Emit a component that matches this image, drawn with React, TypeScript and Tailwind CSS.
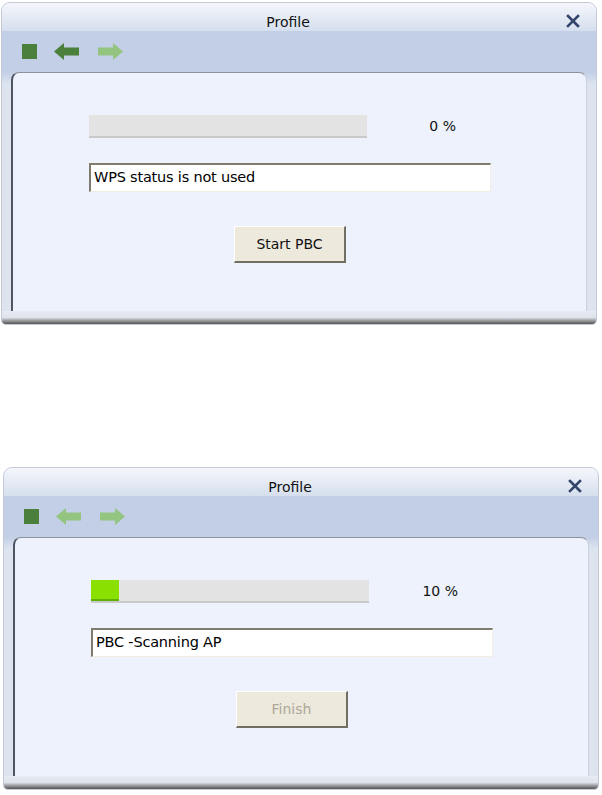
import React from "react";

type WindowProps = {
  percent: number;
  status: string;
  buttonLabel: string;
  buttonDisabled?: boolean;
  backEnabled?: boolean;
};

function StopIcon() {
  return <span className="block h-[15px] w-[15px] bg-[#4b7f3c]" />;
}

function ArrowIcon({ dir, color }: { dir: "left" | "right"; color: string }) {
  return (
    <svg width="26" height="17" viewBox="0 0 26 17" className={dir === "right" ? "-scale-x-100" : ""}>
      <path d="M0 8.5 L10 0 L10 4.5 L25 4.5 L25 12.5 L10 12.5 L10 17 Z" fill={color} />
    </svg>
  );
}

function CloseIcon() {
  return (
    <svg width="14" height="14" viewBox="0 0 14 14">
      <path d="M2 2 L12 12 M12 2 L2 12" stroke="#34456b" strokeWidth="2.6" strokeLinecap="square" />
    </svg>
  );
}

function ProfileWindow({ percent, status, buttonLabel, buttonDisabled, backEnabled }: WindowProps) {
  return (
    <div className="flex h-[323px] w-[596px] flex-col overflow-hidden rounded-t-[9px] rounded-b-[5px] border border-[#c3cad6] bg-[#dde4f0]">
      <div className="relative flex h-[28px] shrink-0 items-end justify-center bg-gradient-to-b from-[#f4f6fb] to-[#d6dfee] pr-[22px]">
        <span className="text-[14px] leading-[18px] text-[#111]">Profile</span>
        <span className="absolute right-[16px] top-[11px]">
          <CloseIcon />
        </span>
      </div>
      <div className="flex h-[41px] shrink-0 items-center gap-[17px] bg-[#c2cfe6] pl-[20px]">
        <StopIcon />
        <ArrowIcon dir="left" color={backEnabled ? "#4b7f3c" : "#93c480"} />
        <ArrowIcon dir="right" color="#93c480" />
      </div>
      <div className="flex flex-1 flex-col bg-gradient-to-b from-[#c2cfe6] to-[#dde4f0] to-[12px] px-[9px]">
        <div className="flex-1 rounded-t-[8px] border-l-2 border-t border-r border-[#4e5563] border-t-[#8c929c] border-r-[#c9d1de] bg-[#eef2fd] pl-[76px] pt-[42px]">
          <div className="flex items-center">
            <div className="relative h-[23px] w-[278px] overflow-hidden border-b-2 border-[#c9c9c9] bg-[#e3e3e3]">
              {percent > 0 ? (
                <div className="h-full border-b-2 border-[#5fb200] bg-[#8ae000]" style={{ width: `${percent}%` }} />
              ) : null}
            </div>
            <span className="w-[89px] text-right text-[14px] text-[#111]">{percent} %</span>
          </div>
          <div className="mt-[25px] flex h-[29px] w-[402px] items-center border-l-2 border-t-2 border-[#7f7b6f] border-b border-r border-b-[#f1ede2] border-r-[#f1ede2] bg-white pl-[3px] text-[14.5px] tracking-[-0.2px] text-black">
            {status}
          </div>
          <button
            type="button"
            disabled={buttonDisabled}
            className={`ml-[145px] mt-[34px] h-[37px] w-[112px] border border-t-white border-l-white border-b-2 border-r-2 border-b-[#716f64] border-r-[#716f64] bg-[#ede9dd] text-[14px] ${buttonDisabled ? "text-[#aca899]" : "text-[#111]"}`}
          >
            {buttonLabel}
          </button>
        </div>
      </div>
      <div className="h-[13px] shrink-0 bg-gradient-to-b from-[#e6ebf4] via-[#dfe3ea] via-50% to-[#555]" />
    </div>
  );
}

export default function App() {
  return (
    <div className="min-h-[795px] w-[602px] bg-white pl-[1px] pt-[2px]" style={{ fontFamily: '"DejaVu Sans", Verdana, sans-serif' }}>
      <ProfileWindow percent={0} status="WPS status is not used" buttonLabel="Start PBC" backEnabled />
      <div className="mt-[142px] pl-[2px]">
        <ProfileWindow percent={10} status="PBC -Scanning AP" buttonLabel="Finish" buttonDisabled />
      </div>
    </div>
  );
}
